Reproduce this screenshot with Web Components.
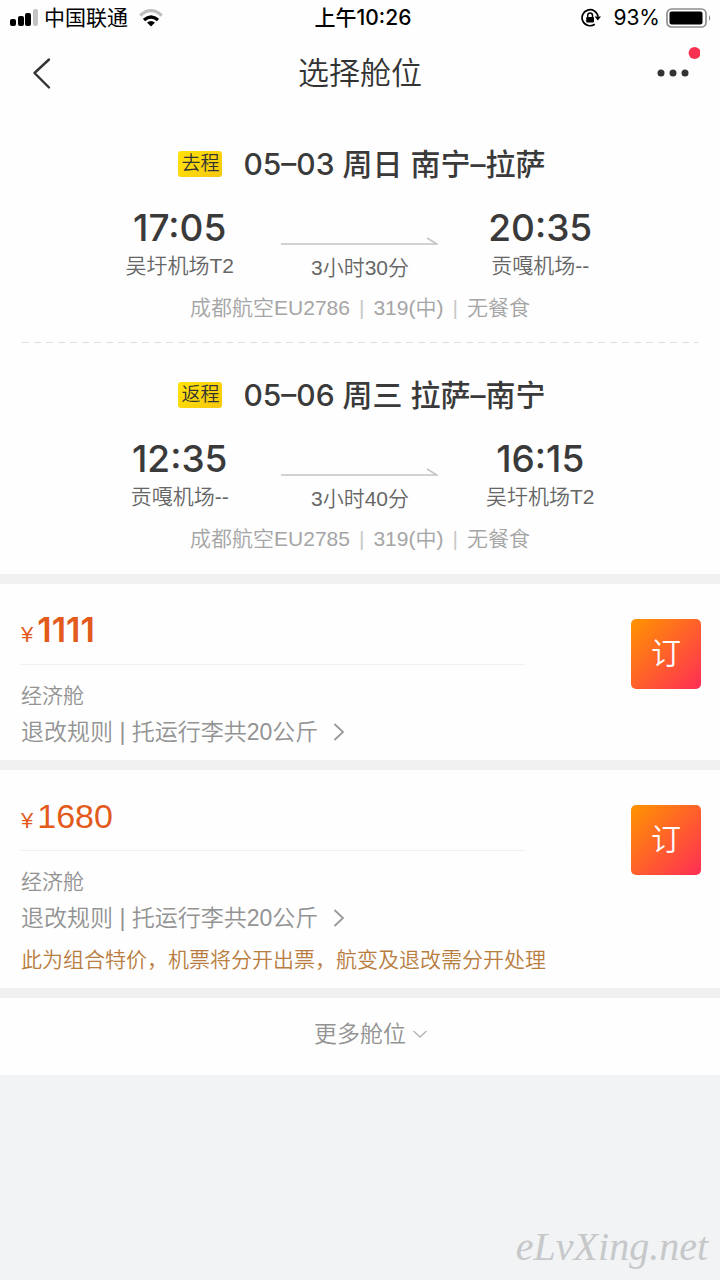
<!DOCTYPE html>
<html lang="zh-CN">
<head>
<meta charset="utf-8">
<meta name="viewport" content="width=device-width, initial-scale=1">
<title>选择舱位</title>
<style>
  html, body { margin: 0; min-height: 100%; background: #f1f3f5; }
  body { font-family: "Liberation Sans", "Noto Sans CJK SC", sans-serif; color: #333; }
</style>
</head>
<body>
<flight-app>
  <status-bar slot="status" carrier="中国联通" time="上午10:26" battery="93%"></status-bar>
  <nav-bar slot="nav">选择舱位</nav-bar>
  <flight-leg tag="去程" depart="17:05" from="吴圩机场T2" duration="3小时30分" arrive="20:35" to="贡嘎机场--" flight="成都航空EU2786" plane="319(中)" meal="无餐食" divided>05–03 周日 南宁–拉萨</flight-leg>
  <flight-leg tag="返程" depart="12:35" from="贡嘎机场--" duration="3小时40分" arrive="16:15" to="吴圩机场T2" flight="成都航空EU2785" plane="319(中)" meal="无餐食">05–06 周三 拉萨–南宁</flight-leg>
  <fare-card price="1111" cabin="经济舱" baggage="托运行李共20公斤" featured></fare-card>
  <fare-card price="1680" cabin="经济舱" baggage="托运行李共20公斤">此为组合特价，机票将分开出票，航变及退改需分开处理</fare-card>
  <more-cabins>更多舱位</more-cabins>
  <site-mark slot="mark">eLvXing.net</site-mark>
</flight-app>

<script>
class Base extends HTMLElement {
  connectedCallback() {
    if (this.shadowRoot) return;
    this.attachShadow({ mode: 'open' }).innerHTML = this.render();
  }
  a(name) { return this.getAttribute(name) || ''; }
}

customElements.define('flight-app', class extends Base {
  render() {
    return `<style>
      :host { display: flex; flex-direction: column; min-height: 100vh; }
      header, main { background: #fefefe; }
      footer { margin-top: auto; display: flex; justify-content: flex-end; padding: 0 12px 10px; }
    </style>
    <header><slot name="status"></slot><slot name="nav"></slot></header>
    <main><slot></slot></main>
    <footer><slot name="mark"></slot></footer>`;
  }
});

customElements.define('status-bar', class extends Base {
  render() {
    return `<style>
      :host { display: grid; grid-template-columns: 1fr auto 1fr; align-items: center; height: 36px; padding: 0 8px 0 10px; color: #000; font: 21px/36px Inter, "Noto Sans CJK SC", sans-serif; }
      div { display: flex; align-items: center; }
      .right { justify-content: flex-end; }
      .time { font-weight: 500; padding-left: 4px; }
      .carrier { margin: 0 11px 0 5px; }
      .battery { margin: 0 6px 0 12px; }
      svg { display: block; flex: none; }
    </style>
    <div>
      <svg width="29" height="18" viewBox="0 0 29 18" aria-hidden="true">
        <rect x="0" y="10" width="6" height="7" rx="2"/><rect x="8" y="7" width="6" height="10" rx="2"/>
        <rect x="15" y="4" width="6" height="13" rx="2"/><rect x="23" y="0" width="5" height="17" rx="2" fill="#c3c3c3"/>
      </svg>
      <span class="carrier">${this.a('carrier')}</span>
      <svg width="24" height="18" viewBox="0 0 24 18" fill="none" stroke-width="3.2" aria-hidden="true">
        <path d="M1.2 6.6Q12-3.2 22.8 6.6" stroke="#bdbdbd"/><path d="M5 11q7-6 14 0" stroke="#000" stroke-width="3.6"/>
        <path d="M8 13.6q4-3 8 0L12 17.4z" fill="#000"/>
      </svg>
    </div>
    <div class="time">${this.a('time')}</div>
    <div class="right">
      <svg width="20" height="20" viewBox="0 0 20 20" fill="none" stroke="#000" stroke-width="1.7" aria-hidden="true">
        <path d="M13.8 16.2A8 8 0 1 1 17 8.6"/><path d="M13.6 8.6h6.4l-3.2 3.8z" fill="#000" stroke="none"/>
        <rect x="5.2" y="9" width="7.8" height="5.6" rx="1" fill="#000" stroke="none"/><path d="M6.7 9V7.4a2.4 2.4 0 0 1 4.8 0V9" stroke-width="1.5"/>
      </svg>
      <span class="battery">${this.a('battery')}</span>
      <svg width="46" height="20" viewBox="0 0 46 20" aria-hidden="true">
        <rect x="1" y="1" width="39" height="18" rx="4.5" fill="#fff" stroke="#8f8f8f" stroke-width="1.7"/>
        <rect x="3.5" y="3.5" width="33" height="13" rx="2"/><path d="M43 7q2.4 3 0 6z" fill="#888"/>
      </svg>
    </div>`;
  }
});

customElements.define('nav-bar', class extends Base {
  render() {
    return `<style>
      :host { display: grid; grid-template-columns: 1fr auto 1fr; align-items: center; height: 76px; padding: 0 20px; }
      h1 { margin: 0; font-size: 31px; line-height: 40px; font-weight: 350; color: #333; }
      button { border: 0; padding: 0; background: none; display: block; }
      .more { justify-self: end; }
      svg { display: block; }
    </style>
    <button aria-label="返回"><svg width="44" height="44" viewBox="0 0 44 44" fill="none" stroke="#333" stroke-width="2.4" stroke-linecap="round" stroke-linejoin="round"><path d="M29 7.5 14.5 21 29 35.5"/></svg></button>
    <h1><slot></slot></h1>
    <button class="more" aria-label="更多"><svg width="44" height="60" viewBox="0 0 44 60" fill="#333"><circle cx="5" cy="29" r="3.5"/><circle cx="17" cy="29" r="3.5"/><circle cx="29" cy="29" r="3.5"/><circle cx="38.6" cy="9" r="6" fill="#f9304f"/></svg></button>`;
  }
});

customElements.define('flight-leg', class extends Base {
  render() {
    return `<style>
      :host { display: block; padding: 32px 22px 0; }
      :host::after { content: ""; display: block; height: 1px; margin-top: 19px; }
      :host([divided])::after { background: repeating-linear-gradient(90deg, #e0e0e0 0 7px, transparent 7px 12px); }
      .title { display: flex; align-items: center; justify-content: center; gap: 21px; margin-bottom: 22px; padding-left: 4px; }
      .tag { padding: 0 3px; border-radius: 3px; background: linear-gradient(135deg, #ffe20a, #f7c80e); font-size: 19px; line-height: 26px; font-weight: 350; }
      h2 { margin: 0; font: 500 30px/40px Inter, "Noto Sans CJK SC", sans-serif; color: #3a3a3a; }
      .route { display: grid; grid-template-columns: repeat(3, 1fr); padding: 0 10%; text-align: center; font-size: 21px; line-height: 32px; font-weight: 350; color: #666; }
      .route time { display: block; font: 500 37px/44px Inter, sans-serif; color: #3a3a3a; }
      .arrow { display: block; width: 157px; height: 8px; margin: 31px auto 7px; }
      .info { display: flex; justify-content: center; gap: 9px; margin-top: 9px; font-size: 21px; line-height: 30px; font-weight: 350; color: #a5a5a5; }
      i { font-style: normal; color: #c8c8c8; }
    </style>
    <div class="title"><span class="tag">${this.a('tag')}</span><h2><slot></slot></h2></div>
    <div class="route">
      <div><time>${this.a('depart')}</time>${this.a('from')}</div>
      <div><svg class="arrow" viewBox="0 0 157 8" fill="none" stroke="#c4c4c4" stroke-width="1.6" aria-hidden="true"><path d="M0 7h156L146 1"/></svg>${this.a('duration')}</div>
      <div><time>${this.a('arrive')}</time>${this.a('to')}</div>
    </div>
    <div class="info"><span>${this.a('flight')}</span><i>|</i><span>${this.a('plane')}</span><i>|</i><span>${this.a('meal')}</span></div>`;
  }
});

customElements.define('fare-card', class extends Base {
  render() {
    const note = this.textContent.trim() ? '<div class="note"><slot></slot></div>' : '';
    return `<style>
      :host { display: grid; grid-template-columns: 1fr 70px; column-gap: 106px; align-items: start; border-top: 10px solid #f0f0f1; padding: 24px 19px 10px 21px; font-size: 21px; line-height: 32px; font-weight: 350; color: #939393; }
      .price { display: flex; align-items: baseline; gap: 4px; height: 40px; padding: 2px 0 14px; border-bottom: 1px solid #f0f0f0; line-height: 40px; color: #e25a1c; font-size: 22px; }
      b { font-size: 34px; font-weight: 400; }
      :host([featured]) b { font-family: Inter, sans-serif; font-weight: 600; }
      .cabin { margin-top: 15px; }
      a { display: flex; align-items: center; gap: 15px; margin-top: 2px; font-size: 23px; line-height: 36px; color: inherit; text-decoration: none; white-space: nowrap; }
      .note { grid-column: 1 / -1; padding-top: 6px; color: #b87d40; line-height: 36px; }
      button { width: 70px; height: 70px; margin-top: 11px; border: 0; border-radius: 5px; padding: 0; color: #fff; font: 350 30px/70px "Liberation Sans", "Noto Sans CJK SC", sans-serif; background: linear-gradient(135deg, #ff9500, #ff2d55); }
    </style>
    <div>
      <div class="price">¥<b>${this.a('price')}</b></div>
      <div class="cabin">${this.a('cabin')}</div>
      <a href="#rules"><span>退改规则 | ${this.a('baggage')}</span><svg width="12" height="18" viewBox="0 0 12 18" fill="none" stroke="#999" stroke-width="1.8" aria-hidden="true"><path d="M1.5 1 10 9l-8.5 8"/></svg></a>
    </div>
    <button>订</button>
    ${note}`;
  }
});

customElements.define('more-cabins', class extends Base {
  render() {
    return `<style>
      :host { display: block; border-top: 10px solid #f0f0f1; }
      button { display: flex; align-items: center; justify-content: center; gap: 7px; width: 100%; height: 77px; padding: 0 0 6px 21px; border: 0; background: none; color: #939393; font: 350 23px/36px "Liberation Sans", "Noto Sans CJK SC", sans-serif; }
    </style>
    <button><slot></slot><svg width="14" height="8" viewBox="0 0 14 8" fill="none" stroke="#b5b5b5" stroke-width="1.4" aria-hidden="true"><path d="M.5 1 7 7l6.5-6"/></svg></button>`;
  }
});

customElements.define('site-mark', class extends Base {
  render() {
    return `<style>:host { display: block; font: italic 40px/46px "Liberation Serif", serif; color: #c6c8c9; }</style><slot></slot>`;
  }
});
</script>
</body>
</html>
